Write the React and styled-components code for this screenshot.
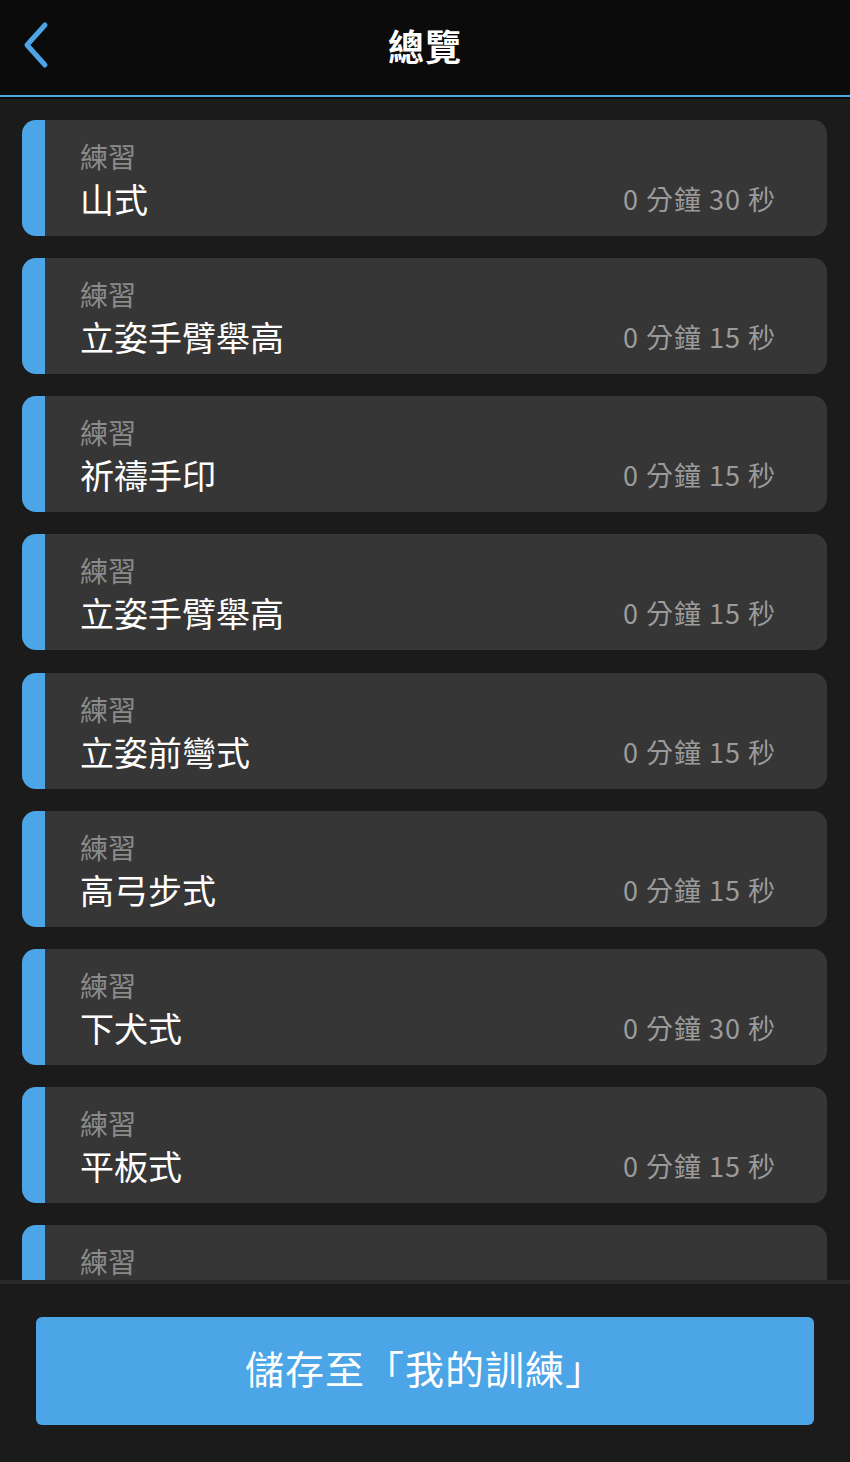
import React from 'react'
import styled, { createGlobalStyle } from 'styled-components'

const colors = {
  header: '#0b0b0b',
  bg: '#1b1b1b',
  card: '#363636',
  blue: '#4ca5e6',
  label: '#8a8a8a',
  time: '#9b9b9b',
  white: '#ffffff',
}

const font = `"Noto Sans CJK TC", "Noto Sans", sans-serif`

const GlobalStyle = createGlobalStyle`
  html, body {
    margin: 0;
    padding: 0;
    background: ${colors.bg};
    font-family: ${font};
  }
`

const Page = styled.div`
  width: 850px;
  height: 1462px;
  display: flex;
  flex-direction: column;
  background: ${colors.bg};
  overflow: hidden;
`

const Header = styled.header`
  height: 95px;
  flex-shrink: 0;
  display: flex;
  align-items: center;
  justify-content: center;
  position: relative;
  background: ${colors.header};
  border-bottom: 2px solid ${colors.blue};
  box-shadow: 0 2px 0 ${colors.header};
  h1 {
    margin: 0 0 6px;
    color: ${colors.white};
    font-size: 36px;
    font-weight: 700;
    letter-spacing: 1px;
  }
`

const BackBtn = styled.button`
  position: absolute;
  left: 14px;
  top: 18px;
  width: 42px;
  height: 54px;
  padding: 0;
  border: none;
  background: none;
  display: flex;
  align-items: center;
  justify-content: center;
`

const List = styled.div`
  flex: 1;
  overflow: hidden;
  display: flex;
  flex-direction: column;
  gap: 22.15px;
  padding: 23px 23px 0 22px;
`

const Card = styled.div`
  flex-shrink: 0;
  height: 116px;
  display: flex;
  border-radius: 14px;
  overflow: hidden;
  background: ${colors.card};
`

const Strip = styled.div`
  width: 23px;
  flex-shrink: 0;
  background: ${colors.blue};
`

const Body = styled.div`
  flex: 1;
  display: flex;
  flex-direction: column;
  padding: 16px 52px 0 35px;
`

const Label = styled.div`
  color: ${colors.label};
  font-size: 28px;
  line-height: 40px;
`

const Row = styled.div`
  display: flex;
  align-items: center;
  justify-content: space-between;
  margin-top: 1px;
`

const Name = styled.div`
  color: ${colors.white};
  font-size: 34px;
  line-height: 44px;
`

const Time = styled.div`
  color: ${colors.time};
  font-size: 27px;
  line-height: 44px;
  letter-spacing: 1px;
  margin-right: -1px;
`

const Footer = styled.footer`
  flex-shrink: 0;
  height: 182px;
  display: flex;
  justify-content: center;
  padding-top: 33px;
  box-sizing: border-box;
  border-top: 4px solid #2a2a2a;
  background: ${colors.bg};
`

const SaveBtn = styled.button`
  width: 778px;
  height: 108px;
  border: none;
  border-radius: 6px;
  background: ${colors.blue};
  color: ${colors.white};
  font-family: ${font};
  font-size: 39px;
  letter-spacing: 1px;
  padding: 0 0 8px;
`

const items = [
  { name: '山式', time: '0 分鐘 30 秒' },
  { name: '立姿手臂舉高', time: '0 分鐘 15 秒' },
  { name: '祈禱手印', time: '0 分鐘 15 秒' },
  { name: '立姿手臂舉高', time: '0 分鐘 15 秒' },
  { name: '立姿前彎式', time: '0 分鐘 15 秒' },
  { name: '高弓步式', time: '0 分鐘 15 秒' },
  { name: '下犬式', time: '0 分鐘 30 秒' },
  { name: '平板式', time: '0 分鐘 15 秒' },
  { name: '', time: '' },
]

const App = () => {
  return (
    <Page>
      <GlobalStyle />
      <Header>
        <BackBtn>
          <svg width="32" height="50" viewBox="0 0 32 50">
            <path d="M26 5 L8 25 L26 45" fill="none" stroke={colors.blue} strokeWidth="5" strokeLinecap="round" strokeLinejoin="round" />
          </svg>
        </BackBtn>
        <h1>總覽</h1>
      </Header>
      <List>
        {items.map((it, i) => (
          <Card key={i}>
            <Strip />
            <Body>
              <Label>練習</Label>
              <Row>
                <Name>{it.name}</Name>
                <Time>{it.time}</Time>
              </Row>
            </Body>
          </Card>
        ))}
      </List>
      <Footer>
        <SaveBtn>儲存至「我的訓練」</SaveBtn>
      </Footer>
    </Page>
  )
}

export default App
